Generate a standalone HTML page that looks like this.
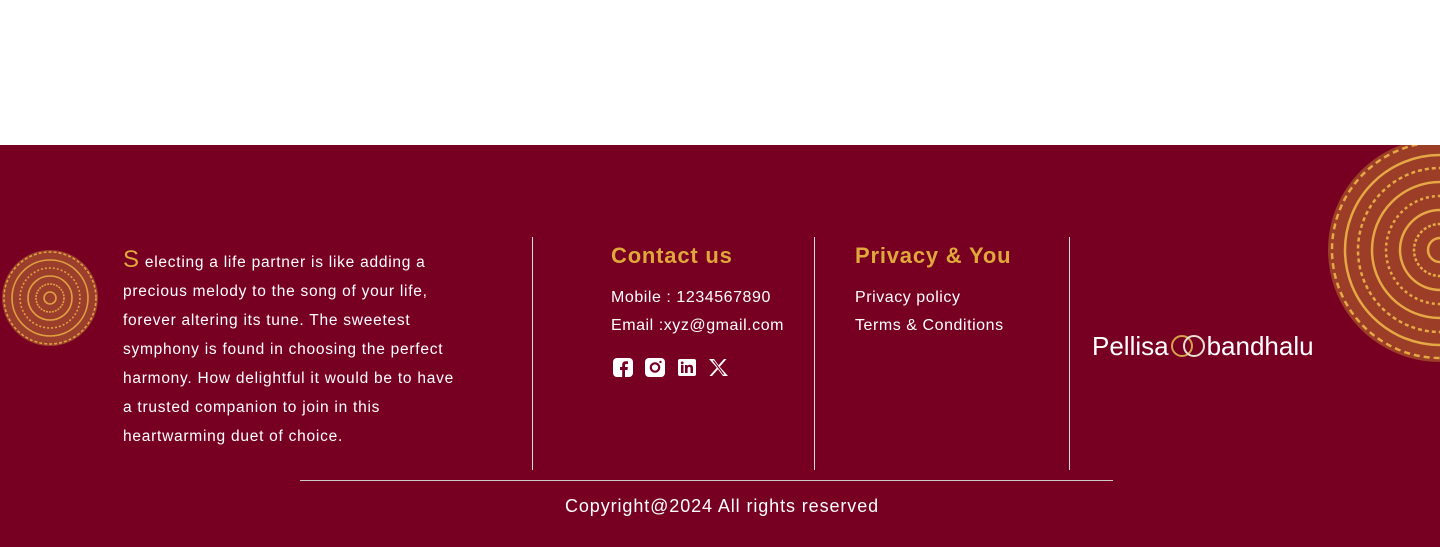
<!DOCTYPE html>
<html><head><meta charset="utf-8"><style>
*{margin:0;padding:0;box-sizing:border-box}
body{width:1440px;height:547px;background:#fff;font-family:"Liberation Sans",sans-serif;overflow:hidden;position:relative}
.f{position:absolute;left:0;top:145px;width:1440px;height:402px;background:#770022;overflow:hidden}
.t{position:absolute;color:#fff;white-space:nowrap}
.p{left:123px;top:100px;font-size:15.5px;line-height:29px;letter-spacing:.75px}
.p b{color:#e0a83a;font-size:24px;font-weight:normal}
.v{position:absolute;top:92px;width:1px;height:233px;background:#ddd}
h3{position:absolute;color:#e0a83a;font-size:22px;font-weight:bold;letter-spacing:.8px}
.l{font-size:16px;line-height:28px;letter-spacing:.55px}
</style></head><body>
<div class="f">
<svg style="position:absolute;left:0;top:103px" width="100" height="100" viewBox="-50 -50 100 100">
<circle r="48" fill="#c88a3a" opacity=".45"/>
<g fill="none" stroke="#e0a040" stroke-width="1.6">
<circle r="46" stroke-dasharray="3 2"/><circle r="38"/><circle r="30" stroke-dasharray="2 2"/><circle r="22"/><circle r="14" stroke-dasharray="2 1"/><circle r="6"/>
</g></svg>
<svg style="position:absolute;left:1325px;top:-10px" width="230" height="230" viewBox="-115 -115 230 230">
<circle r="112" fill="#c8882f" opacity=".45"/>
<g fill="none" stroke="#e6a844" stroke-width="2.5">
<circle r="108" stroke-dasharray="6 4"/><circle r="95"/><circle r="82" stroke-dasharray="4 3"/><circle r="68"/><circle r="54" stroke-dasharray="3 3"/><circle r="40"/><circle r="26" stroke-dasharray="3 2"/><circle r="12"/>
</g></svg>
<div class="t p"><b>S</b> electing a life partner is like adding a<br>precious melody to the song of your life,<br>forever altering its tune. The sweetest<br>symphony is found in choosing the perfect<br>harmony. How delightful it would be to have<br>a trusted companion to join in this<br>heartwarming duet of choice.</div>
<div class="v" style="left:532px"></div>
<div class="v" style="left:814px"></div>
<div class="v" style="left:1069px"></div>
<h3 style="left:611px;top:98px">Contact us</h3>
<div class="t l" style="left:611px;top:139px">Mobile : 1234567890<br>Email :xyz@gmail.com</div>
<svg style="position:absolute;left:612px;top:211px" width="120" height="22" viewBox="0 0 120 22">
<rect x="1" y="2" width="20" height="19" rx="4" fill="#fff"/><path d="M13 21v-7h2.5l.4-3H13V9.3c0-.8.3-1.3 1.4-1.3H16V5.4c-.3 0-1.2-.1-2.2-.1-2.2 0-3.6 1.3-3.6 3.7V11H8v3h2.2v7z" fill="#770022"/>
<rect x="33" y="2" width="20" height="19" rx="4" fill="#fff"/><circle cx="43" cy="11.5" r="4.2" fill="none" stroke="#770022" stroke-width="2.2"/><circle cx="48.5" cy="6" r="1.2" fill="#770022"/>
<rect x="66" y="3" width="18" height="17" rx="2" fill="#fff"/><path d="M69 9h2.5v8H69zM70.2 5.5a1.4 1.4 0 1 1 0 2.8 1.4 1.4 0 0 1 0-2.8zM73 9h2.4v1.1c.4-.7 1.3-1.3 2.6-1.3 2.5 0 3 1.6 3 3.8V17h-2.5v-3.9c0-1 0-2.2-1.3-2.2s-1.6 1-1.6 2.1v4H73z" fill="#770022"/>
<path d="M97 3h5l4.5 6.2L112 3h2.5l-6.8 7.8L116 20h-5l-5-6.8-6 6.8h-2.5l7.3-8.3z" fill="#fff"/><path d="M100.5 4.5h1.5l10.5 14h-1.5z" fill="#770022"/>
</svg>
<h3 style="left:855px;top:98px">Privacy &amp; You</h3>
<div class="t l" style="left:855px;top:139px">Privacy policy<br>Terms &amp; Conditions</div>
<div class="t" style="left:1092px;top:184px;font-size:26px;letter-spacing:0">Pellisa<span style="display:inline-block;width:38px;position:relative;top:3px"><svg width="38" height="26" viewBox="0 0 38 26"><circle cx="13" cy="14" r="10" fill="none" stroke="#d6a24a" stroke-width="2"/><circle cx="25" cy="14" r="10" fill="none" stroke="#e8e0d0" stroke-width="2"/></svg></span>bandhalu</div>
<div style="position:absolute;left:300px;top:335px;width:813px;height:1px;background:#ccc"></div>
<div class="t" style="left:565px;top:351px;font-size:18px;letter-spacing:.9px">Copyright@2024 All rights reserved</div>
</div>
</body></html>
